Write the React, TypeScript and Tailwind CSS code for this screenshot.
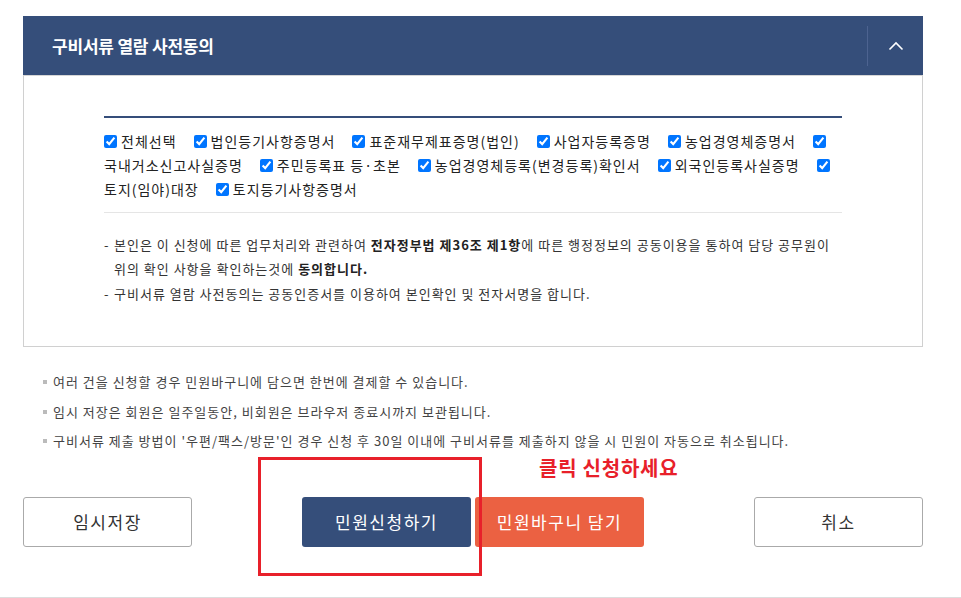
import React from 'react';

const docs = [
  '전체선택',
  '법인등기사항증명서',
  '표준재무제표증명(법인)',
  '사업자등록증명',
  '농업경영체증명서',
  '국내거소신고사실증명',
  '주민등록표 등·초본',
  '농업경영체등록(변경등록)확인서',
  '외국인등록사실증명',
  '토지(임야)대장',
  '토지등기사항증명서',
];

const notes = [
  '여러 건을 신청할 경우 민원바구니에 담으면 한번에 결제할 수 있습니다.',
  '임시 저장은 회원은 일주일동안, 비회원은 브라우저 종료시까지 보관됩니다.',
  "구비서류 제출 방법이 '우편/팩스/방문'인 경우 신청 후 30일 이내에 구비서류를 제출하지 않을 시 민원이 자동으로 취소됩니다.",
];

export default function App() {
  return (
    <div className="w-[961px] h-[598px] bg-white relative overflow-hidden text-[#333] font-['Noto_Sans_CJK_KR','Noto_Sans',sans-serif]">
      <div className="pt-4 pl-[23px] pr-[38px]">
        {/* header */}
        <div className="h-[59px] bg-[#354e7a] flex items-center justify-between">
          <h2 className="pl-[29px] text-white text-[17px] font-bold tracking-[-0.2px]">구비서류 열람 사전동의</h2>
          <div className="h-10 w-[56px] border-l border-[#4d6390] flex items-center justify-center">
            <svg width="16" height="10" viewBox="0 0 16 10" fill="none" stroke="white" strokeWidth="1.6">
              <path d="M1.5 8.5L8 2l6.5 6.5" />
            </svg>
          </div>
        </div>

        {/* body */}
        <div className="border border-t-[#d6d6d6] border-[#d0d0d0] px-20 pt-10 pb-[40px]">
          <div className="border-t-2 border-[#354e7a]">
            <div className="pt-[11px] pb-[11px] text-[14px] leading-6 tracking-[1px] text-[#222] border-b border-[#e5e5e5]">
              {docs.map((d) => (
                <React.Fragment key={d}>
                  <input type="checkbox" defaultChecked className="w-[13px] h-[13px] align-[-1px] mr-[4px]" />
                  <wbr />
                  <span className="whitespace-nowrap mr-[17px]">{d}</span>
                  <wbr />
                </React.Fragment>
              ))}
            </div>
            <ul className="pt-5 text-[13px] leading-6 tracking-[1px] text-[#333]">
              <li className="flex">
                <span className="w-[10px] shrink-0">-</span>
                <span>
                  본인은 이 신청에 따른 업무처리와 관련하여 <b className="text-[#222]">전자정부법 제36조 제1항</b>에 따른 행정정보의 공동이용을 통하여 담당 공무원이
                  <br />
                  위의 확인 사항을 확인하는것에 <b className="text-[#222]">동의합니다.</b>
                </span>
              </li>
              <li className="flex mt-px">
                <span className="w-[10px] shrink-0">-</span>
                <span>구비서류 열람 사전동의는 공동인증서를 이용하여 본인확인 및 전자서명을 합니다.</span>
              </li>
            </ul>
          </div>
        </div>

        {/* notes */}
        <ul className="pt-[25px] pl-5 flex flex-col gap-[9.5px] text-[13px] leading-5 tracking-[1px] text-[#444]">
          {notes.map((n) => (
            <li key={n} className="flex items-center">
              <span className="w-1 h-1 bg-[#bbb] mr-[6px] shrink-0" />
              {n}
            </li>
          ))}
        </ul>

        {/* buttons */}
        <div className="mt-[46px] pb-[50px] flex justify-between text-[17px] tracking-[1.5px]">
          <button className="w-[169px] h-[50px] border border-[#aaa] rounded-[3px] text-[#333]">임시저장</button>
          <div className="flex gap-1">
            <button className="w-[169px] h-[50px] rounded-[3px] bg-[#354e7a] text-white">민원신청하기</button>
            <button className="w-[169px] h-[50px] rounded-[3px] bg-[#eb6142] text-white">민원바구니 담기</button>
          </div>
          <button className="w-[169px] h-[50px] border border-[#aaa] rounded-[3px] text-[#333]">취소</button>
        </div>
      </div>
      <div className="border-t border-[#ddd]" />

      {/* annotation */}
      <div className="absolute left-[258px] top-[457px] w-[224px] h-[119px] border-[3px] border-[#e8202a] pointer-events-none" />
      <div className="absolute left-[539px] top-[454px] text-[20px] font-bold text-[#e8202a] leading-7 tracking-[0.75px]">클릭 신청하세요</div>
    </div>
  );
}
